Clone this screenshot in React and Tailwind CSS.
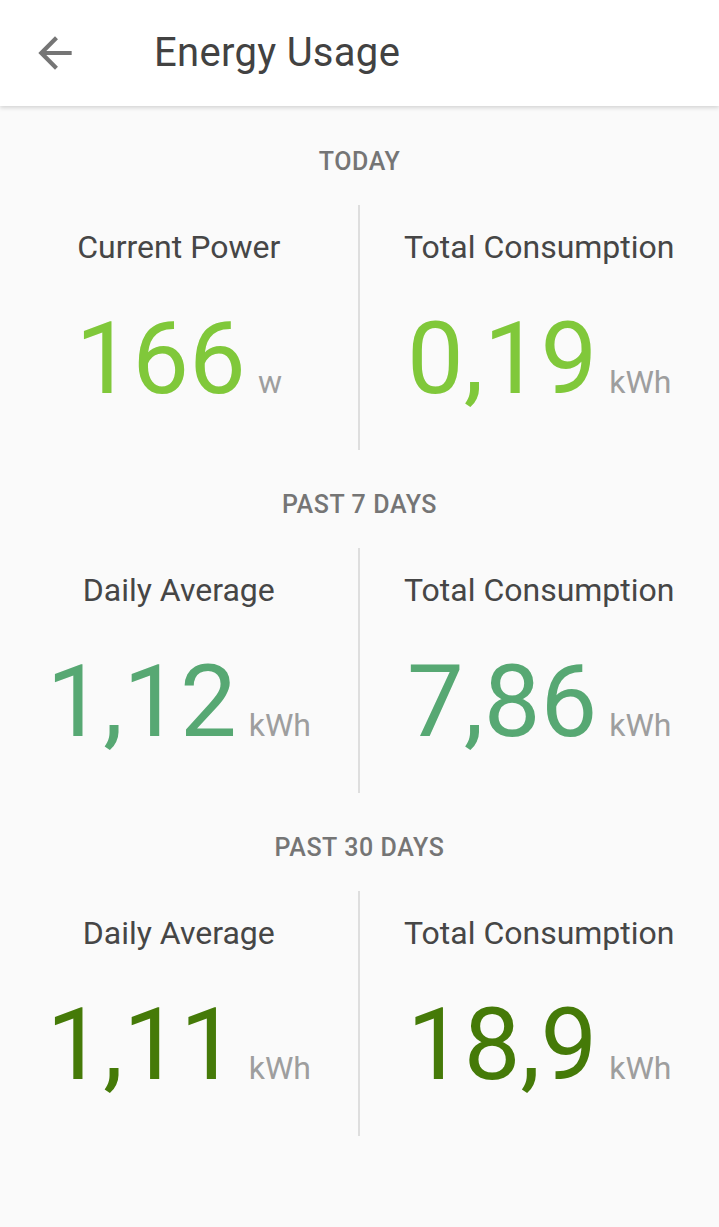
import React from 'react';

const SECTIONS = [
  {
    title: 'Today',
    color: 'text-[#80c83a]',
    items: [
      { label: 'Current Power', value: '166', unit: 'w' },
      { label: 'Total Consumption', value: '0,19', unit: 'kWh' },
    ],
  },
  {
    title: 'Past 7 days',
    color: 'text-[#57a873]',
    items: [
      { label: 'Daily Average', value: '1,12', unit: 'kWh' },
      { label: 'Total Consumption', value: '7,86', unit: 'kWh' },
    ],
  },
  {
    title: 'Past 30 days',
    color: 'text-[#457a08]',
    items: [
      { label: 'Daily Average', value: '1,11', unit: 'kWh' },
      { label: 'Total Consumption', value: '18,9', unit: 'kWh' },
    ],
  },
];

const BackArrow = () => (
  <svg viewBox="0 0 24 24" className="w-[50px] h-[50px]" fill="#757575">
    <path d="M20 11H7.83l5.59-5.59L12 4l-8 8 8 8 1.41-1.41L7.83 13H20v-2z" />
  </svg>
);

const Stat = ({ label, value, unit, color }) => (
  <div className="flex flex-col items-center">
    <div className="mt-[22px] h-[40px] leading-[40px] text-[32px] text-[#464646]">{label}</div>
    <div className="mt-[41px] flex items-baseline">
      <span className={`text-[101px] leading-none ${color}`}>{value}</span>
      <span className="ml-[12px] text-[32px] leading-none text-[#9e9e9e]">{unit}</span>
    </div>
  </div>
);

export default function App() {
  return (
    <div className="w-[719px] h-[1227px] bg-[#fafafa] overflow-hidden" style={{ fontFamily: 'Roboto, "Noto Sans", sans-serif' }}>
      {/* Header */}
      <header className="h-[106px] bg-white flex items-center shadow-[0_2px_4px_rgba(0,0,0,0.15)] relative z-10">
        <div className="ml-[30px] flex items-center justify-center">
          <BackArrow />
        </div>
        <h1 className="ml-[74px] text-[40px] tracking-[0.3px] text-[#424242]">Energy Usage</h1>
      </header>

      {/* Sections */}
      <main className="pt-[40px]">
        {SECTIONS.map((section) => (
          <section key={section.title} className="mb-[39px]">
            <div className="h-[32px] leading-[32px] text-center text-[25px] tracking-[0.6px] font-medium uppercase text-[#757575]">
              {section.title}
            </div>
            <div className="mt-[27px] grid grid-cols-2 h-[245px]">
              {section.items.map((item, i) => (
                <div key={i} className={i === 0 ? 'border-r-2 border-[#dedede]' : ''}>
                  <Stat {...item} color={section.color} />
                </div>
              ))}
            </div>
          </section>
        ))}
      </main>
    </div>
  );
}
